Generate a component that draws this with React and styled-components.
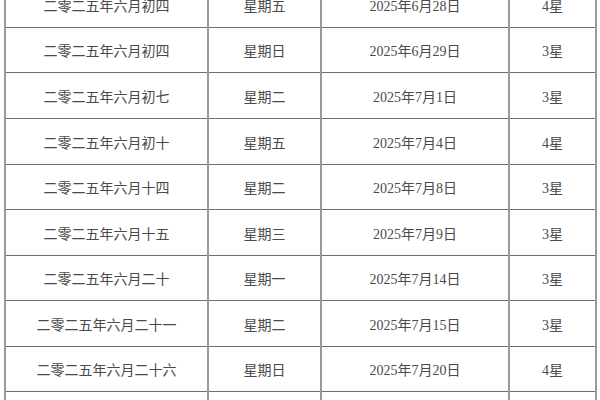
import React from 'react';
import styled, { createGlobalStyle } from 'styled-components';

const GlobalStyle = createGlobalStyle`
  html, body {
    margin: 0;
    padding: 0;
    background: #ffffff;
    overflow: hidden;
  }
`;

const widths = [203, 113, 188, 87];

const rows = [
  { lunar: '二零二五年六月初四', week: '星期五', date: '2025年6月28日', star: '4星', h: 45 },
  { lunar: '二零二五年六月初四', week: '星期日', date: '2025年6月29日', star: '3星', h: 45 },
  { lunar: '二零二五年六月初七', week: '星期二', date: '2025年7月1日', star: '3星', h: 46 },
  { lunar: '二零二五年六月初十', week: '星期五', date: '2025年7月4日', star: '4星', h: 46 },
  { lunar: '二零二五年六月十四', week: '星期二', date: '2025年7月8日', star: '3星', h: 45 },
  { lunar: '二零二五年六月十五', week: '星期三', date: '2025年7月9日', star: '3星', h: 46 },
  { lunar: '二零二五年六月二十', week: '星期一', date: '2025年7月14日', star: '3星', h: 45 },
  { lunar: '二零二五年六月二十一', week: '星期二', date: '2025年7月15日', star: '3星', h: 46 },
  { lunar: '二零二五年六月二十六', week: '星期日', date: '2025年7月20日', star: '4星', h: 45 },
  { lunar: '二零二五年六月二十八', week: '星期二', date: '2025年7月22日', star: '3星', h: 45 },
];

const Page = styled.div`
  width: 600px;
  height: 400px;
  overflow: hidden;
  padding: 0 5px 0 4px;
  box-sizing: border-box;
`;

const Table = styled.table`
  width: 100%;
  margin-top: -18px;
  border-collapse: collapse;
  table-layout: fixed;
  font-family: "Liberation Serif", "Noto Sans CJK SC", serif;
  font-size: 14px;
  color: #4a4a4a;
`;

const Col = styled.col`
  width: ${(p) => p.w}px;
`;

const Row = styled.tr`
  height: ${(p) => p.h}px;
`;

const Cell = styled.td`
  border-top: 1px solid #6e6e6e;
  border-bottom: 1px solid #6e6e6e;
  border-left: 2px solid #9a9a9a;
  border-right: 2px solid #9a9a9a;
  text-align: center;
  vertical-align: middle;
  padding: 0;
  white-space: nowrap;
`;

export default function App() {
  return (
    <>
      <GlobalStyle />
      <Page>
        <Table>
          <colgroup>
            {widths.map((w, i) => (
              <Col key={i} w={w} />
            ))}
          </colgroup>
          <tbody>
            {rows.map((r, i) => (
              <Row key={i} h={r.h}>
                <Cell>{r.lunar}</Cell>
                <Cell>{r.week}</Cell>
                <Cell>{r.date}</Cell>
                <Cell>{r.star}</Cell>
              </Row>
            ))}
          </tbody>
        </Table>
      </Page>
    </>
  );
}
